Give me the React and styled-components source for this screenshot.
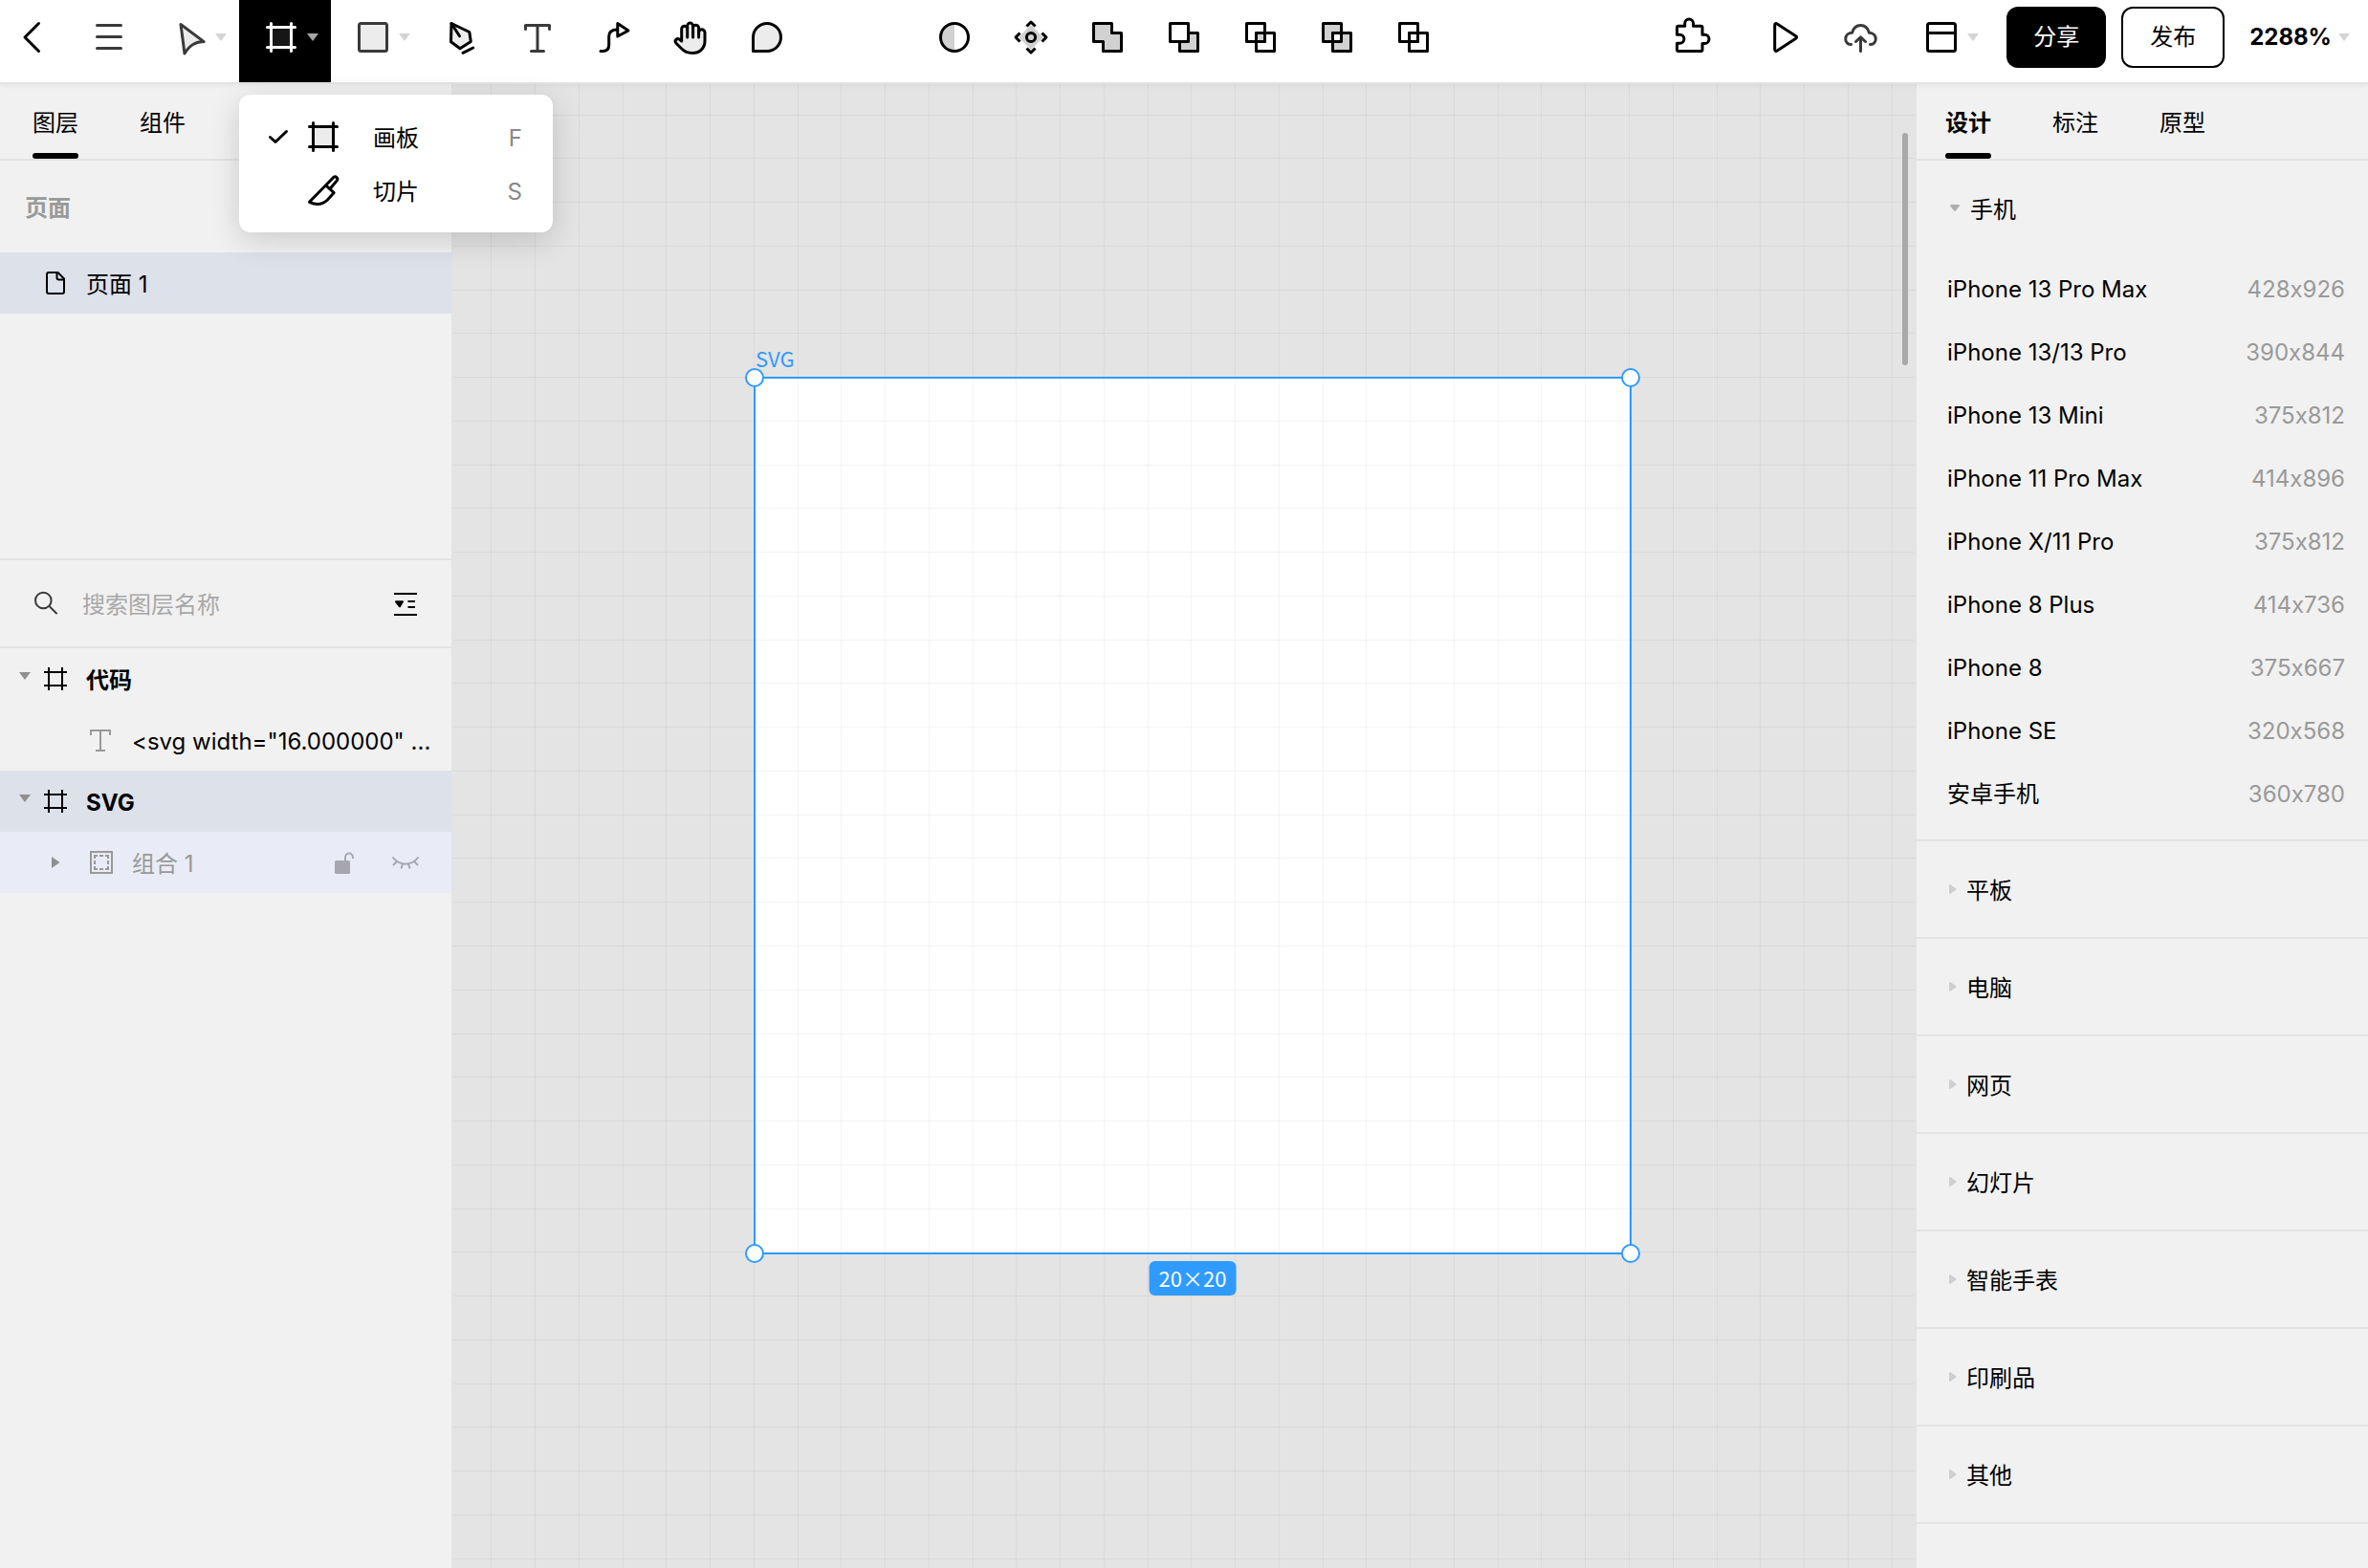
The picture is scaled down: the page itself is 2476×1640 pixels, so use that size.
import React from "react";
import styled, { createGlobalStyle, css } from "styled-components";

const color = {
  line: "#e3e3e3",
  panel: "#f1f1f1",
  canvas: "#e4e4e4",
  selected: "#dce1ea",
  nested: "#e9ecf6",
  accent: "#2f9bff",
  muted: "#999999",
};

const GlobalStyle = createGlobalStyle`
  *, *::before, *::after { box-sizing: border-box; }
  body {
    margin: 0;
    color: #000;
    font: 400 24px/32px Inter, "Noto Sans CJK SC", sans-serif;
    font-feature-settings: "calt" 0;
    overflow: hidden;
  }
  button, input { font: inherit; font-feature-settings: inherit; color: inherit; }
  ul { list-style: none; margin: 0; padding: 0; }
  svg { display: block; flex: none; overflow: visible; }
`;

const plainButton = css`
  display: flex;
  align-items: center;
  border: 0;
  padding: 0;
  background: none;
  text-align: left;
  cursor: pointer;
`;

const Screen = styled.div`
  display: flex;
  flex-direction: column;
  height: 100vh;
`;

const Workspace = styled.div`
  flex: 1;
  min-height: 0;
  display: flex;
`;

const Label = styled.span`
  padding-top: 3px;
`;

/* ---------- toolbar ---------- */

const Toolbar = styled.header`
  position: relative;
  z-index: 2;
  display: grid;
  grid-template-columns: 1fr auto 1fr;
  height: 88px;
  flex: none;
  background: #fff;
  border-bottom: 2px solid ${color.line};
  box-shadow: 0 1px 6px rgba(0, 0, 0, 0.06);
`;

const ToolGroup = styled.div`
  display: flex;
  justify-content: ${(p) => p.$align || "flex-start"};
`;

const ToolSlot = styled.div`
  position: relative;
  display: flex;
`;

const Tool = styled.button`
  ${plainButton}
  width: ${(p) => p.$width || 80}px;
  height: 86px;
  padding: 0 0 8px ${(p) => (p.$menu ? 24 : 0)}px;
  justify-content: ${(p) => (p.$menu ? "flex-start" : "center")};
  gap: 6px;
  background: ${(p) => (p.$active ? "#000" : "transparent")};
  color: ${(p) => (p.$active ? "#fff" : "#000")};
`;

const Gap = styled.span`
  width: 18px;
`;

const Actions = styled.div`
  display: flex;
  align-items: center;
  gap: 16px;
  height: 78px;
  padding: 0 18px 0 16px;
`;

const ActionButton = styled.button`
  height: 64px;
  padding: 0 28px;
  border: ${(p) => (p.$primary ? "0" : "2px solid #000")};
  border-radius: 12px;
  background: ${(p) => (p.$primary ? "#000" : "#fff")};
  color: ${(p) => (p.$primary ? "#fff" : "#000")};
  cursor: pointer;
`;

const ZoomButton = styled.button`
  ${plainButton}
  gap: 6px;
  margin-left: 10px;
  font-weight: 700;
`;

/* ---------- tool menu ---------- */

const Menu = styled.ul`
  position: absolute;
  top: 99px;
  left: 0;
  width: 328px;
  && { padding: 16px 0; }
  background: #fff;
  border-radius: 12px;
  box-shadow: 0 8px 32px rgba(0, 0, 0, 0.16);
`;

const MenuItem = styled.button`
  ${plainButton}
  width: 100%;
  height: 56px;
  padding: 0 32px 0 28px;
`;

const MenuCheck = styled.span`
  width: 24px;
  margin-right: 16px;
`;

const MenuLabel = styled(Label)`
  flex: 1;
  margin-left: 32px;
`;

const MenuKey = styled(Label)`
  color: #888;
`;

/* ---------- side panels ---------- */

const Panel = styled.aside`
  width: 474px;
  flex: none;
  background: ${color.panel};
  border: 0 solid ${color.line};
  border-${(p) => p.$edge}-width: 2px;
  overflow: hidden;
`;

const Tabs = styled.div`
  display: flex;
  gap: 64px;
  height: 80px;
  padding: 0 32px 0 ${(p) => p.$inset}px;
  border-bottom: 2px solid ${color.line};
`;

const Tab = styled.button`
  ${plainButton}
  position: relative;
  height: 78px;
  padding-top: 3px;
  font-weight: ${(p) => p.$weight || 400};

  &::after {
    content: "";
    position: absolute;
    left: 0;
    right: 0;
    bottom: 0;
    height: 6px;
    border-radius: 3px;
    background: ${(p) => (p["aria-selected"] ? "#000" : "transparent")};
  }
`;

const Pages = styled.section`
  height: 418px;
  border-bottom: 2px solid ${color.line};
`;

const PagesTitle = styled.h2`
  margin: 0;
  padding: 34px 26px 30px;
  font-size: 24px;
  font-weight: 700;
  line-height: 32px;
  color: ${color.muted};
`;

const PageItem = styled.button`
  ${plainButton}
  width: 100%;
  height: 64px;
  padding-left: 46px;
  gap: 20px;
  background: ${color.selected};
`;

const SearchBar = styled.div`
  display: flex;
  align-items: center;
  height: 92px;
  padding: 0 36px;
  border-bottom: 2px solid ${color.line};
`;

const SearchInput = styled.input`
  flex: 1;
  min-width: 0;
  margin-left: 26px;
  padding: 3px 0 0;
  border: 0;
  outline: 0;
  background: none;
  &::placeholder { color: #a8a8a8; opacity: 1; }
`;

const IconButton = styled.button`
  ${plainButton}
`;

const LayerRow = styled.li`
  display: flex;
  align-items: center;
  height: 64px;
  padding: 0 16px 0 ${(p) => (p.$depth ? 54 : 20)}px;
  background: ${(p) => p.$fill || "transparent"};
  color: ${(p) => (p.$dim ? color.muted : "#000")};
`;

const LayerToggle = styled.button`
  ${plainButton}
  width: ${(p) => (p.$depth ? 40 : 26)}px;
  height: 24px;
  flex: none;
`;

const LayerName = styled(Label)`
  flex: 1;
  min-width: 0;
  margin-left: 20px;
  font-weight: ${(p) => (p.$strong ? 700 : 400)};
  white-space: nowrap;
`;

const LayerActions = styled.span`
  display: flex;
  align-items: center;
  gap: 38px;
  padding-right: 18px;
`;

/* ---------- presets ---------- */

const PresetGroup = styled.section`
  border-bottom: 2px solid ${color.line};
`;

const PresetTitle = styled.button`
  ${plainButton}
  width: 100%;
  height: 100px;
  padding-left: 34px;
  gap: 10px;
`;

const PresetList = styled.ul`
  && { padding: 2px 0 14px; }
`;

const Preset = styled.button`
  ${plainButton}
  justify-content: space-between;
  width: 100%;
  height: 66px;
  padding: 0 24px 0 32px;
`;

const PresetSize = styled.span`
  color: ${color.muted};
`;

/* ---------- canvas ---------- */

const Canvas = styled.main`
  position: relative;
  flex: 1;
  min-width: 0;
  overflow: hidden;
  background: ${color.canvas};
`;

const Artboard = styled.div`
  position: absolute;
  left: 314px;
  top: 306px;
  width: 918px;
  height: 918px;
  background: #fff;
`;

const Selection = styled(Artboard)`
  background: none;
  border: 2px solid ${color.accent};
`;

const GridLines = styled.svg`
  position: absolute;
  left: 0;
  top: 0;
  width: 100%;
  height: 100%;
`;

const Handle = styled.span`
  position: absolute;
  width: 20px;
  height: 20px;
  border: 2px solid ${color.accent};
  border-radius: 50%;
  background: #fff;
  ${(p) => p.$y}: -11px;
  ${(p) => p.$x}: -11px;
`;

const ArtboardName = styled.span`
  position: absolute;
  left: 0;
  bottom: 100%;
  font: 400 22px/32px "Noto Sans CJK SC", sans-serif;
  color: ${color.accent};
  margin-bottom: 6px;
`;

const SizeBadge = styled.span`
  position: absolute;
  top: 100%;
  left: 50%;
  transform: translateX(-50%);
  margin-top: 9px;
  padding: 0 10px 2px;
  border-radius: 6px;
  background: ${color.accent};
  color: #fff;
  font: 400 22px/34px "Noto Sans CJK SC", sans-serif;
  white-space: nowrap;
`;

const ScrollThumb = styled.span`
  position: absolute;
  top: 51px;
  right: 7px;
  width: 6px;
  height: 243px;
  border-radius: 3px;
  background: #a8a8a8;
`;

/* ---------- icons ---------- */

const Icon = ({ size = 40, stroke = "currentColor", weight = 3, children }) => (
  <svg
    width={size}
    height={size}
    viewBox={`0 0 ${size} ${size}`}
    fill="none"
    stroke={stroke}
    strokeWidth={weight}
    strokeLinecap="round"
    strokeLinejoin="round"
    aria-hidden="true"
  >
    {children}
  </svg>
);

const soft = "#ececec";
const shade = "#d1d1d1";
const ink = "#3a3a3a";

const Caret = ({ fill = "#d4d4d4" }) => (
  <svg width="14" height="14" viewBox="0 0 14 14" aria-hidden="true">
    <path d="M1 3H13L7 11Z" fill={fill} />
  </svg>
);

const BackIcon = () => (
  <Icon>
    <path d="M23.5 5.5L9 20L23.5 34.5" />
  </Icon>
);
const MenuIcon = () => (
  <Icon stroke={ink}>
    <path d="M7.5 7.5H32.5M7.5 19.5H32.5M7.5 31.5H32.5" />
  </Icon>
);
const CursorIcon = () => (
  <Icon stroke={ink}>
    <path d="M11 6.5L35.2 24.6C27 25 21 27 15 37Z" fill={soft} />
  </Icon>
);
const FrameIcon = ({ fill = soft }) => (
  <Icon>
    <rect x="10" y="10" width="20" height="20" fill={fill} stroke="none" />
    <path d="M9.5 5.5V34.5M30.5 5.5V34.5M5.5 9.5H34.5M5.5 30.5H34.5" />
  </Icon>
);
const RectIcon = () => (
  <Icon stroke={ink}>
    <rect x="5.5" y="5.5" width="29" height="29" rx="2" fill={soft} />
  </Icon>
);
const PenIcon = () => (
  <Icon>
    <path d="M10 5.5L28.8 14.5L30.3 24.5L19 31.7L9.5 24.7Z" fill={soft} />
    <path d="M10 5.5L18.5 18.8M22 36.3L32.7 31" />
  </Icon>
);
const TextIcon = () => (
  <Icon stroke={ink}>
    <path d="M7.5 11.5V7.5H32.5V11.5M20 7.5V34.5M13.5 34.5H26.5" />
  </Icon>
);
const ConnectorIcon = () => (
  <Icon>
    <path d="M6 34.6H8C12.7 34.6 14.7 32 14.7 28V19C14.7 14.5 17.5 12 23.5 12" />
    <path d="M23.8 5.6L35 13L23.8 19Z" />
  </Icon>
);
const HandIcon = () => (
  <Icon>
    <path
      d="M10.7 24V11.5A3 3 0 0 1 16.7 11V8A2.9 2.9 0 0 1 22.5 8V10A3 3 0 0 1 28.6 10.5V15A3.2 3.2 0 0 1 35 15V24C35 31.5 29.5 36.5 22 36.5C16 36.5 13 34.5 10.5 31.8L4.8 26C2.8 23.2 5.8 20.6 8.6 22.2Z"
      fill={soft}
    />
    <path d="M16.7 10V20M22.6 9V20M28.6 12V20" />
  </Icon>
);
const CommentIcon = () => (
  <Icon>
    <path d="M5.5 34.5V20A14.5 14.5 0 1 1 20 34.5Z" fill={soft} />
  </Icon>
);
const MaskIcon = () => (
  <Icon>
    <path d="M20 5.5A14.5 14.5 0 0 0 20 34.5Z" fill={shade} stroke="none" />
    <circle cx="20" cy="20" r="14.5" />
  </Icon>
);
const MoveIcon = () => (
  <Icon>
    <path d="M20 7L33 20L20 33L7 20Z" fill={shade} stroke="none" />
    <circle cx="20" cy="20" r="4.6" />
    <path d="M15.5 8.5L20 4L24.5 8.5M15.5 31.5L20 36L24.5 31.5M8.5 15.5L4 20L8.5 24.5M31.5 15.5L36 20L31.5 24.5" strokeLinecap="butt" />
  </Icon>
);
const UnionIcon = () => (
  <Icon>
    <path d="M5.5 5.5H24.5V15.5H34.5V34.5H15.5V24.5H5.5Z" fill={shade} />
  </Icon>
);
const Square = ({ at, fill = "none" }) => (
  <rect x={at} y={at} width="19" height="19" fill={fill} />
);
const SubtractIcon = () => (
  <Icon>
    <Square at={15.5} fill={shade} />
    <Square at={5.5} fill="#fff" />
  </Icon>
);
const OverlapIcon = ({ outer = "none", inner = "none" }) => (
  <Icon>
    <Square at={5.5} fill={outer} />
    <Square at={15.5} fill={outer} />
    <rect x="15.5" y="15.5" width="9" height="9" fill={inner} />
  </Icon>
);
const PluginIcon = () => (
  <Icon>
    <path d="M5.5 9.8A1.5 1.5 0 0 1 7 8.3H13.7V5.5A4.4 4.4 0 0 1 22.5 5.5V8.3H30.5A1.5 1.5 0 0 1 32 9.8V17.3H34.4A4.5 4.5 0 0 1 34.4 26.5H32V33A1.5 1.5 0 0 1 30.5 34.5H7A1.5 1.5 0 0 1 5.5 33V26.3H8.4A4.4 4.4 0 0 0 8.4 17.3H5.5Z" />
  </Icon>
);
const PlayIcon = () => (
  <Icon>
    <path d="M9.7 7.2C9.7 5.4 11 5.2 12.2 6L31.8 18.8C32.8 19.5 32.8 20.5 31.8 21.2L12.2 34C11 34.8 9.7 34.5 9.7 32.8Z" />
  </Icon>
);
const UploadIcon = () => (
  <Icon stroke={ink}>
    <path d="M9.5 27.5C1.8 27.8 1.5 15.5 10.6 15.3C13.5 5 25.5 5 28.4 15.3C37.5 15.5 37.2 27.8 29.5 27.5" />
    <path d="M19.5 34.5V20M14.5 24.5L19.5 19.8L24.5 24.5" />
  </Icon>
);
const LayoutIcon = () => (
  <Icon>
    <rect x="5.5" y="5.5" width="29" height="29" rx="2" />
    <path d="M5.5 15.5H34.5" />
  </Icon>
);
const CheckIcon = () => (
  <Icon size={24}>
    <path d="M4.5 12.5L10 17.5L21.5 6.5" />
  </Icon>
);
const SliceIcon = () => (
  <Icon>
    <path d="M5.5 32.3L22.7 14.8L31.2 22.6L24.5 30C19.5 34.8 12.5 35.8 5.5 32.3Z" />
    <path d="M22.7 14.8L30.6 6.6C33 4.5 36.2 7.4 34.2 10L27 18.5" />
  </Icon>
);
const PageIcon = () => (
  <Icon size={24} weight={2}>
    <path d="M5 1H14.5L21 7.5V21A2 2 0 0 1 19 23H5A2 2 0 0 1 3 21V3A2 2 0 0 1 5 1Z" />
    <path d="M13.5 1.5V6.5A2 2 0 0 0 15.5 8.5H20.5" />
  </Icon>
);
const SearchIcon = () => (
  <Icon size={24} weight={2} stroke={ink}>
    <circle cx="9.3" cy="9" r="8.3" />
    <path d="M15.5 15L23 22.5" />
  </Icon>
);
const CollapseIcon = () => (
  <Icon size={24} weight={2}>
    <path d="M0 2H24M0 24H24M14.5 10H22M14.5 16H22" strokeLinecap="butt" />
    <path d="M2 10.3H9L6 15.3Z" fill="currentColor" />
  </Icon>
);
const SmallFrameIcon = () => (
  <Icon size={24} weight={2}>
    <path d="M5 0V24M19 0V24M0 5H24M0 19H24" strokeLinecap="butt" />
  </Icon>
);
const SmallTextIcon = () => (
  <Icon size={24} weight={2} stroke={color.muted}>
    <path d="M1 7V2H21V7M11 2V23M6 23H16" strokeLinecap="butt" strokeLinejoin="miter" />
  </Icon>
);
const GroupIcon = () => (
  <Icon size={24} weight={2} stroke={color.muted}>
    <rect x="1" y="1" width="22" height="22" strokeLinejoin="miter" />
    <path
      d="M5 8V5H8M10 5H14M16 5H19V8M19 10V14M19 16V19H16M14 19H10M8 19H5V16M5 14V10"
      strokeLinecap="butt"
      strokeLinejoin="miter"
    />
  </Icon>
);
const UnlockIcon = () => (
  <Icon size={24} weight={2} stroke="#a6a6b0">
    <rect x="2" y="10" width="16" height="14" rx="1.5" fill="#a6a6b0" stroke="none" />
    <path d="M13 10V7C13 1 21 1 21 7V8" strokeLinecap="butt" />
  </Icon>
);
const HiddenIcon = () => (
  <svg width="28" height="24" viewBox="0 0 28 24" fill="none" stroke="#a6a6b0" strokeWidth="2" aria-hidden="true">
    <path d="M0.5 6.5C8 16 20 16 27.5 6.5M5 11L1 15M11 13.5L9.5 18.5M17 13.5L18.5 18.5M23 11L27 15" />
  </svg>
);

const LayerArrow = ({ open }) => (
  <svg width="12" height="24" viewBox="0 0 12 24" fill="#909090" aria-hidden="true">
    <path d={open ? "M0 5H12L6 13Z" : "M0 6V18L8.5 12Z"} />
  </svg>
);

const PresetArrow = ({ open }) =>
  open ? (
    <svg width="12" height="12" viewBox="0 0 12 12" aria-hidden="true">
      <path d="M2 3H10L6 8Z" fill="#adadad" stroke="#adadad" strokeLinejoin="round" strokeWidth="2" />
    </svg>
  ) : (
    <svg width="8" height="12" viewBox="0 0 8 12" aria-hidden="true">
      <path d="M1 2V10L6.5 6Z" fill="#cfcfcf" stroke="#cfcfcf" strokeLinejoin="round" strokeWidth="2" />
    </svg>
  );

/* ---------- data ---------- */

const drawTools = [
  ["钢笔", PenIcon],
  ["文字", TextIcon],
  ["连线", ConnectorIcon],
  ["抓手", HandIcon],
  ["评论", CommentIcon],
];

const shapeTools = [
  ["蒙版", <MaskIcon />],
  ["编辑", <MoveIcon />],
  ["联集", <UnionIcon />],
  ["减去", <SubtractIcon />],
  ["交集", <OverlapIcon inner={shade} />],
  ["差集", <OverlapIcon outer={shade} inner="#fff" />],
  ["拼合", <OverlapIcon />],
];

const phones = [
  ["iPhone 13 Pro Max", "428x926"],
  ["iPhone 13/13 Pro", "390x844"],
  ["iPhone 13 Mini", "375x812"],
  ["iPhone 11 Pro Max", "414x896"],
  ["iPhone X/11 Pro", "375x812"],
  ["iPhone 8 Plus", "414x736"],
  ["iPhone 8", "375x667"],
  ["iPhone SE", "320x568"],
  ["安卓手机", "360x780"],
];

const otherPresets = ["平板", "电脑", "网页", "幻灯片", "智能手表", "印刷品", "其他"];

/* One document pixel at the current zoom, snapped to whole screen pixels. */
const STEP = 45.76;
const ORIGIN = { x: 314.3, y: 306.6 };
const gridStops = (origin) =>
  Array.from({ length: 90 }, (_, i) => Math.floor(origin + (i - 7) * STEP)).filter((v) => v >= 0);

function CanvasGrid() {
  return (
    <GridLines aria-hidden="true" fill="rgba(0,0,0,0.045)">
      {gridStops(ORIGIN.x).map((x) => (
        <rect key={`x${x}`} x={x} y="0" width="1" height="100%" />
      ))}
      {gridStops(ORIGIN.y).map((y) => (
        <rect key={`y${y}`} x="0" y={y} width="100%" height="1" />
      ))}
    </GridLines>
  );
}

function TopBar() {
  return (
    <Toolbar>
      <ToolGroup>
        <Tool $width={74} aria-label="返回"><BackIcon /></Tool>
        <Tool aria-label="菜单"><MenuIcon /></Tool>
        <Tool $width={96} $menu aria-label="选择"><CursorIcon /><Caret /></Tool>
        <ToolSlot>
          <Tool $width={96} $menu $active aria-label="画板" aria-expanded="true">
            <FrameIcon fill="#161616" />
            <Caret fill="#a6a6a6" />
          </Tool>
          <Menu>
            <li>
              <MenuItem>
                <MenuCheck><CheckIcon /></MenuCheck>
                <FrameIcon />
                <MenuLabel>画板</MenuLabel>
                <MenuKey>F</MenuKey>
              </MenuItem>
            </li>
            <li>
              <MenuItem>
                <MenuCheck />
                <SliceIcon />
                <MenuLabel>切片</MenuLabel>
                <MenuKey>S</MenuKey>
              </MenuItem>
            </li>
          </Menu>
        </ToolSlot>
        <Tool $width={96} $menu aria-label="矩形"><RectIcon /><Caret /></Tool>
        {drawTools.map(([name, Glyph]) => (
          <Tool key={name} aria-label={name}><Glyph /></Tool>
        ))}
      </ToolGroup>
      <ToolGroup>
        {shapeTools.map(([name, glyph]) => (
          <Tool key={name} aria-label={name}>{glyph}</Tool>
        ))}
      </ToolGroup>
      <ToolGroup $align="flex-end">
        <Tool aria-label="插件"><PluginIcon /></Tool>
        <Gap />
        <Tool aria-label="演示"><PlayIcon /></Tool>
        <Tool aria-label="上传"><UploadIcon /></Tool>
        <Tool $width={96} $menu aria-label="布局"><LayoutIcon /><Caret /></Tool>
        <Actions>
          <ActionButton $primary>分享</ActionButton>
          <ActionButton>发布</ActionButton>
          <ZoomButton>2288%<Caret /></ZoomButton>
        </Actions>
      </ToolGroup>
    </Toolbar>
  );
}

function LayersPanel() {
  return (
    <Panel $edge="right">
      <Tabs $inset={34} role="tablist">
        <Tab role="tab" aria-selected={true}>图层</Tab>
        <Tab role="tab" aria-selected={false}>组件</Tab>
      </Tabs>
      <Pages>
        <PagesTitle>页面</PagesTitle>
        <PageItem><PageIcon /><Label>页面 1</Label></PageItem>
      </Pages>
      <SearchBar>
        <SearchIcon />
        <SearchInput placeholder="搜索图层名称" aria-label="搜索图层名称" />
        <IconButton aria-label="折叠图层"><CollapseIcon /></IconButton>
      </SearchBar>
      <ul>
        <LayerRow>
          <LayerToggle aria-label="收起"><LayerArrow open /></LayerToggle>
          <SmallFrameIcon />
          <LayerName $strong>代码</LayerName>
        </LayerRow>
        <LayerRow $depth={1}>
          <LayerToggle as="span" $depth={1} />
          <SmallTextIcon />
          <LayerName>&lt;svg width="16.000000" ...</LayerName>
        </LayerRow>
        <LayerRow $fill={color.selected}>
          <LayerToggle aria-label="收起"><LayerArrow open /></LayerToggle>
          <SmallFrameIcon />
          <LayerName $strong>SVG</LayerName>
        </LayerRow>
        <LayerRow $depth={1} $fill={color.nested} $dim>
          <LayerToggle $depth={1} aria-label="展开"><LayerArrow /></LayerToggle>
          <GroupIcon />
          <LayerName>组合 1</LayerName>
          <LayerActions>
            <IconButton aria-label="锁定"><UnlockIcon /></IconButton>
            <IconButton aria-label="显示"><HiddenIcon /></IconButton>
          </LayerActions>
        </LayerRow>
      </ul>
    </Panel>
  );
}

function DesignPanel() {
  return (
    <Panel $edge="left">
      <Tabs $inset={30} role="tablist">
        <Tab role="tab" aria-selected={true} $weight={700}>设计</Tab>
        <Tab role="tab" aria-selected={false}>标注</Tab>
        <Tab role="tab" aria-selected={false}>原型</Tab>
      </Tabs>
      <PresetGroup>
        <PresetTitle aria-expanded="true"><PresetArrow open /><Label>手机</Label></PresetTitle>
        <PresetList>
          {phones.map(([name, size]) => (
            <li key={name}>
              <Preset>
                {name}
                <PresetSize>{size}</PresetSize>
              </Preset>
            </li>
          ))}
        </PresetList>
      </PresetGroup>
      {otherPresets.map((name) => (
        <PresetGroup key={name}>
          <PresetTitle aria-expanded="false"><PresetArrow /><Label>{name}</Label></PresetTitle>
        </PresetGroup>
      ))}
    </Panel>
  );
}

export default function App() {
  return (
    <Screen>
      <GlobalStyle />
      <TopBar />
      <Workspace>
        <LayersPanel />
        <Canvas>
          <Artboard />
          <CanvasGrid />
          <Selection>
            <ArtboardName>SVG</ArtboardName>
            <Handle $x="left" $y="top" />
            <Handle $x="right" $y="top" />
            <Handle $x="left" $y="bottom" />
            <Handle $x="right" $y="bottom" />
            <SizeBadge>20×20</SizeBadge>
          </Selection>
          <ScrollThumb />
        </Canvas>
        <DesignPanel />
      </Workspace>
    </Screen>
  );
}
